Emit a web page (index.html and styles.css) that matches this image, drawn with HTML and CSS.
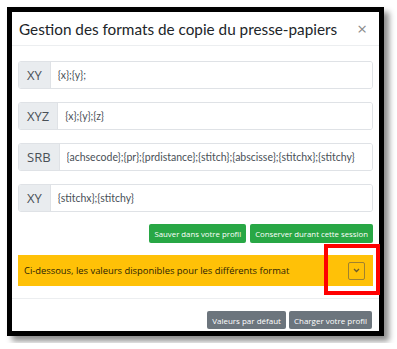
FILE: index.html
```html
<!DOCTYPE html>
<html lang="fr">
<head>
  <meta charset="UTF-8" />
  <title>Gestion des formats de copie</title>
  <link rel="stylesheet" href="styles.css">
</head>
<body>

  <div class="frame">
    <div class="modal-header">
      <h5>Gestion des formats de copie du presse-papiers</h5>
      <span class="close">&times;</span>
    </div>

    <div class="modal-body">
      <div class="input-group">
        <span class="addon">XY</span>
        <input type="text" value="{x};{y};">
      </div>
      <div class="input-group">
        <span class="addon">XYZ</span>
        <input type="text" value="{x};{y};{z}">
      </div>
      <div class="input-group">
        <span class="addon">SRB</span>
        <input type="text" value="{achsecode};{pr};{prdistance};{stitch};{abscisse};{stitchx};{stitchy}">
      </div>
      <div class="input-group">
        <span class="addon">XY</span>
        <input type="text" value="{stitchx};{stitchy}">
      </div>

      <div class="btn-row">
        <button class="btn btn-green">Sauver dans votre profil</button>
        <button class="btn btn-green">Conserver durant cette session</button>
      </div>

      <div class="alert">
        <span>Ci-dessous, les valeurs disponibles pour les différents format</span>
        <button class="toggle">
          <svg width="7" height="5" viewBox="0 0 7 5"><path d="M1 1 L3.5 3.5 L6 1" fill="none" stroke="#6b5a2a" stroke-width="1.3"/></svg>
        </button>
      </div>
    </div>

    <div class="modal-footer">
      <button class="btn btn-gray">Valeurs par défaut</button>
      <button class="btn btn-gray">Charger votre profil</button>
    </div>

    <!-- annotation -->
    <div class="highlight"></div>
  </div>

</body>
</html>
```

FILE: styles.css
```css
body {
  margin: 0;
  padding: 0;
  background: #fff;
  font-family: 'Open Sans', sans-serif;
}
.frame {
  position: relative;
  margin: 7px;
  width: 367px;
  height: 319px;
  border: 5px solid #000;
  background: #fff;
  box-shadow: 5px 5px 6px rgba(0, 0, 0, 0.45);
}
.modal-header {
  display: flex;
  align-items: center;
  justify-content: space-between;
  height: 33px;
  padding: 0 12px 0 7px;
  border-bottom: 1px solid #eceef0;
}
.modal-header h5 {
  margin: 0;
  font-family: 'Lato', sans-serif;
  font-size: 15.3px;
  font-weight: normal;
  color: #212529;
  white-space: nowrap;
}
.close {
  font-size: 17px;
  color: #8a8a8a;
  line-height: 1;
}
.modal-body {
  padding: 15px 6px 0 6px;
}
.input-group {
  display: flex;
  height: 28px;
  margin-bottom: 13px;
  border: 1px solid #dfe2e6;
  border-radius: 3px;
  box-sizing: border-box;
  overflow: hidden;
}
.addon {
  display: flex;
  align-items: center;
  padding: 0 8px;
  background: #e9ecef;
  border-right: 1px solid #dfe2e6;
  font-size: 13px;
  color: #495057;
}
.input-group input {
  flex: 1;
  border: 0;
  padding: 0 7px;
  font-family: 'Lato', sans-serif;
  font-size: 10.5px;
  color: #495057;
  outline: none;
  min-width: 0;
}
.btn-row {
  display: flex;
  justify-content: flex-end;
  gap: 4px;
  margin-top: -1px;
}
.btn {
  height: 19px;
  padding: 0 5px;
  border: 0;
  border-radius: 2px;
  font-family: 'Open Sans', sans-serif;
  font-size: 7.8px;
  color: #fff;
}
.btn-green {
  background: #28a745;
}
.btn-gray {
  background: #6c757d;
}
.alert {
  display: flex;
  align-items: center;
  justify-content: space-between;
  height: 31px;
  margin-top: 12px;
  padding: 0 8px 0 6px;
  background: #ffc107;
  font-size: 9.4px;
}
.alert span {
  color: #2b2306;
}
.toggle {
  width: 17px;
  height: 18px;
  padding: 0;
  border: 1px solid #a0822e;
  border-radius: 2px;
  background: transparent;
  display: flex;
  align-items: center;
  justify-content: center;
}
.modal-footer {
  display: flex;
  justify-content: flex-end;
  gap: 3px;
  margin-top: 12px;
  padding: 12px 7px 0 0;
  border-top: 1px solid #eceef0;
}
.modal-footer .btn {
  height: 18px;
  font-size: 8px;
}
.highlight {
  position: absolute;
  left: 312px;
  top: 232px;
  width: 48px;
  height: 43px;
  border: 4px solid #ff0000;
}
```
